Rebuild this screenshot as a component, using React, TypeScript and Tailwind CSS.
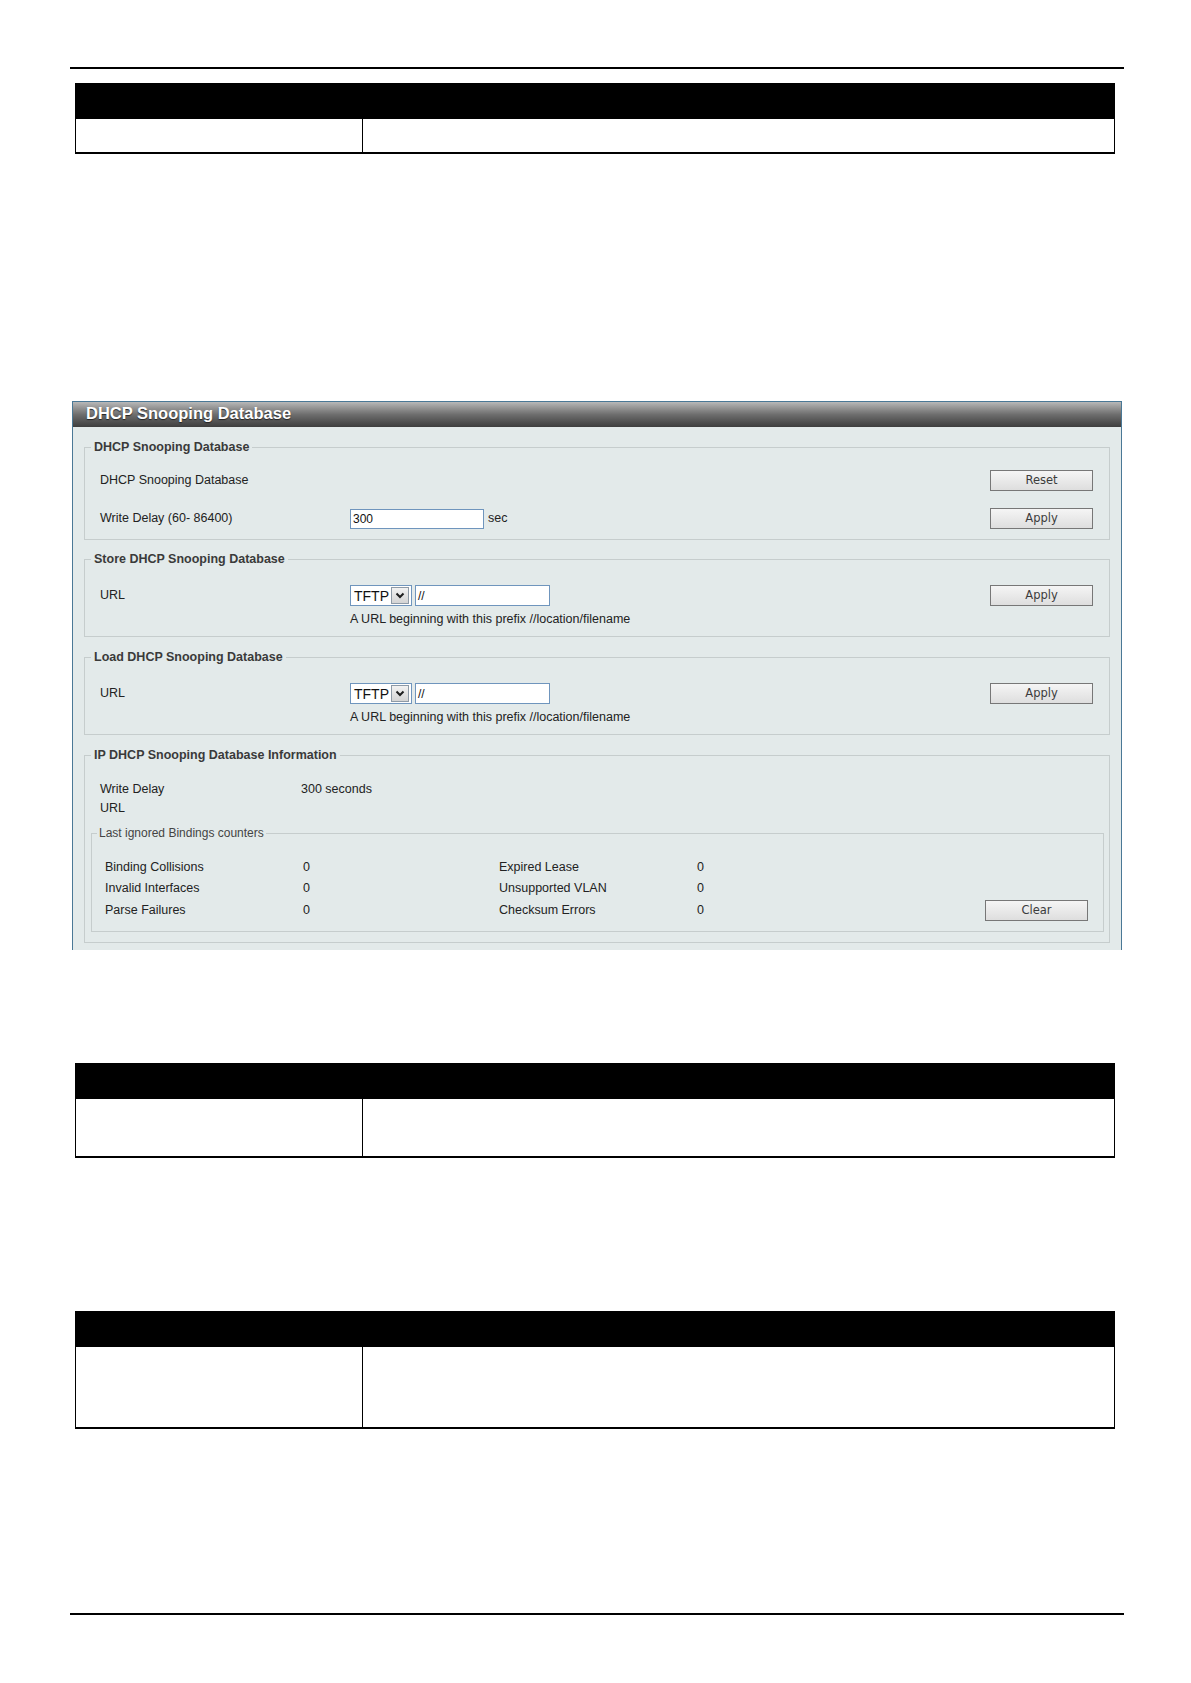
import type { ReactNode } from 'react'

const font = { fontFamily: '"Liberation Sans", Arial, sans-serif' }

function DocTable({ rowClass }: { rowClass: string }) {
  return (
    <div className="ml-[75px] w-[1040px] border-x border-b-2 border-black">
      <div className="h-[36px] bg-black" />
      <div className={`grid grid-cols-[287px_1fr] ${rowClass}`}>
        <div className="border-r border-black" />
        <div />
      </div>
    </div>
  )
}

function Btn({ label }: { label: string }) {
  return (
    <button
      type="button"
      className="h-[21px] w-[103px] border border-[#777] bg-linear-to-b from-[#f5f5f5] to-[#dedede] text-[11.5px] leading-[19px] text-[#3c3c3c]"
      style={{ fontFamily: '"DejaVu Sans", Verdana, sans-serif' }}
    >
      {label}
    </button>
  )
}

function Group({ title, children, className }: { title: string; children: ReactNode; className?: string }) {
  return (
    <fieldset className={`border border-[#c6cdcd] pl-[6px] pr-[16px] ${className ?? ''}`}>
      <legend className="px-[3px] text-[12.5px] font-bold leading-[15px] text-[#3a3a3a]">{title}</legend>
      {children}
    </fieldset>
  )
}

function UrlPicker() {
  return (
    <div className="flex items-center gap-[3px]">
      <div className="flex h-[21px] w-[62px] items-center justify-between border border-[#6f95bd] bg-white pl-[3px] pr-[2px]">
        <span className="text-[14px] leading-none text-[#111]">TFTP</span>
        <span className="flex h-[17px] w-[18px] items-center justify-center border border-[#8e9aa6] bg-linear-to-b from-[#f2f2f2] to-[#d4d4d4]">
          <svg width="10" height="7" viewBox="0 0 10 7">
            <polyline points="1.5,1.5 5,5 8.5,1.5" fill="none" stroke="#1e1e1e" strokeWidth="2" />
          </svg>
        </span>
      </div>
      <div className="flex h-[21px] w-[135px] items-center border border-[#6f95bd] bg-white pl-[2px] text-[12px] text-[#111]">//</div>
    </div>
  )
}

function UrlGroup({ title, className }: { title: string; className?: string }) {
  return (
    <Group title={title} className={className}>
      <div className="pb-[10px] pl-[9px] pt-[18px]">
        <div className="flex h-[21px] items-center">
          <span className="w-[250px]">URL</span>
          <UrlPicker />
          <div className="ml-auto">
            <Btn label="Apply" />
          </div>
        </div>
        <div className="mt-[6px] pl-[250px] leading-[14px]">A URL beginning with this prefix //location/filename</div>
      </div>
    </Group>
  )
}

const counters = [
  ['Binding Collisions', '0', 'Expired Lease', '0'],
  ['Invalid Interfaces', '0', 'Unsupported VLAN', '0'],
  ['Parse Failures', '0', 'Checksum Errors', '0'],
]

export default function App() {
  return (
    <div className="min-h-[1683px] w-[1191px] overflow-hidden bg-white pb-[54px]" style={font}>
      <div className="ml-[70px] mt-[67px] h-[2px] w-[1054px] bg-black" />

      <div className="mt-[14px]">
        <DocTable rowClass="h-[33px]" />
      </div>

      <section className="ml-[72px] mt-[247px] w-[1050px] border-x border-t border-[#4a7896] bg-[#e3eaea] text-[12.5px] text-[#222]">
        <div
          className="h-[25px] bg-linear-to-b from-[#b8b8b8] via-[#6e6e6e] to-[#3e3e3e] pl-[13px] text-[16.5px] font-bold leading-[23px] text-white"
          style={{ textShadow: '0 1px 1px #222' }}
        >
          DHCP Snooping Database
        </div>

        <div className="px-[11px] pb-[7px] pt-[13px]">
          <Group title="DHCP Snooping Database">
            <div className="pb-[10px] pl-[9px] pt-[15px]">
              <div className="flex h-[21px] items-center">
                <span>DHCP Snooping Database</span>
                <div className="ml-auto">
                  <Btn label="Reset" />
                </div>
              </div>
              <div className="mt-[17px] flex h-[21px] items-center">
                <span className="w-[250px]">Write Delay (60- 86400)</span>
                <div className="flex h-[20px] w-[134px] items-center border border-[#6f95bd] bg-white pl-[2px] text-[12px] text-[#111]">300</div>
                <span className="ml-[4px]">sec</span>
                <div className="ml-auto">
                  <Btn label="Apply" />
                </div>
              </div>
            </div>
          </Group>

          <UrlGroup title="Store DHCP Snooping Database" className="mt-[12px]" />
          <UrlGroup title="Load DHCP Snooping Database" className="mt-[13px]" />

          <Group title="IP DHCP Snooping Database Information" className="mt-[13px] !pr-[5px]">
            <div className="pl-[9px] pt-[17px] leading-[19px]">
              <div className="flex">
                <span className="w-[201px]">Write Delay</span>
                <span>300 seconds</span>
              </div>
              <div>URL</div>
            </div>
            <fieldset className="mb-[10px] mt-[8px] border border-[#c6cdcd] pl-[5px] pr-[15px]">
              <legend className="px-[2px] text-[12px] leading-[15px] text-[#444]">Last ignored Bindings counters</legend>
              <div className="pb-[10px] pl-[8px] pt-[16px]">
                {counters.map((row, i) => (
                  <div key={row[0]} className={`flex items-center ${i === 2 ? 'mt-[1px] h-[21px]' : 'h-[21px]'}`}>
                    <span className="w-[198px]">{row[0]}</span>
                    <span className="w-[196px]">{row[1]}</span>
                    <span className="w-[198px]">{row[2]}</span>
                    <span>{row[3]}</span>
                    {i === 2 && (
                      <div className="ml-auto">
                        <Btn label="Clear" />
                      </div>
                    )}
                  </div>
                ))}
              </div>
            </fieldset>
          </Group>
        </div>
      </section>

      <div className="mt-[113px]">
        <DocTable rowClass="h-[57px]" />
      </div>

      <div className="mt-[153px]">
        <DocTable rowClass="h-[80px]" />
      </div>

      <div className="ml-[70px] mt-[184px] h-[2px] w-[1054px] bg-black" />
    </div>
  )
}
